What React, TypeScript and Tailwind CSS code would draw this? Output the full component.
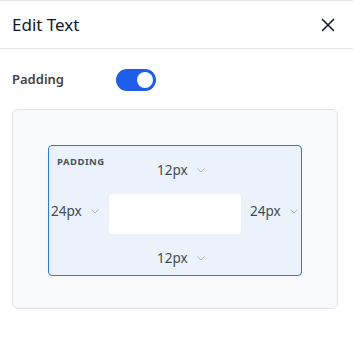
import { X } from "lucide-react";

const Chevron = () => (
  <svg width="8" height="5" viewBox="0 0 8 5" fill="none" className="text-[#b4b8c0]">
    <path d="M0.5 0.5L4 4L7.5 0.5" stroke="currentColor" strokeWidth="1" />
  </svg>
);

const Value = ({ label }: { label: string }) => (
  <div className="flex items-center">
    <span className="w-[40px] text-[13.5px] text-[#444a52]">{label}</span>
    <Chevron />
  </div>
);

const App = () => {
  return (
    <div
      className="w-[353px] h-[353px] bg-white border-t border-gray-200"
      style={{ fontFamily: '"Noto Sans", sans-serif' }}
    >
      <div className="h-12 flex items-center justify-between pl-3 pr-[14px] border-b border-gray-200">
        <span className="text-[17px] text-gray-900">Edit Text</span>
        <X className="w-[22px] h-[22px] text-gray-900" strokeWidth={1.8} />
      </div>

      <div className="px-3 pt-5">
        <div className="flex items-center h-[22px]">
          <span className="w-[104px] text-[13px] font-semibold text-[#3d434b]">Padding</span>
          <div className="w-[40px] h-[22px] rounded-full bg-[#1d5de8] flex items-center justify-end pr-[3px]">
            <div className="w-[16px] h-[16px] rounded-full bg-white" />
          </div>
        </div>

        <div className="mt-[18px] w-[326px] h-[200px] rounded-md border border-[#e2e4e8] bg-[#f8f9fb] pt-[35px] pl-[35px]">
          <div className="relative w-[254px] h-[131px] rounded border border-[#2f76e2] bg-[#ebf2fb]">
            <span className="absolute left-2 top-[9px] text-[9.5px] font-bold tracking-[0.5px] text-[#4b5260]">
              PADDING
            </span>
            <div className="grid grid-cols-[60px_132px_60px]">
              <div />
              <div className="h-[48px] flex items-center pl-[48px]">
                <Value label="12px" />
              </div>
              <div />

              <div className="h-[40px] flex items-center pl-[2px] pb-[5px]">
                <Value label="24px" />
              </div>
              <div className="h-[40px] rounded bg-white" />
              <div className="h-[40px] flex items-center pl-[9px] pb-[5px]">
                <Value label="24px" />
              </div>

              <div />
              <div className="h-[40px] flex items-center pl-[48px] pt-[9px]">
                <Value label="12px" />
              </div>
              <div />
            </div>
          </div>
        </div>
      </div>
    </div>
  );
};

export default App;
